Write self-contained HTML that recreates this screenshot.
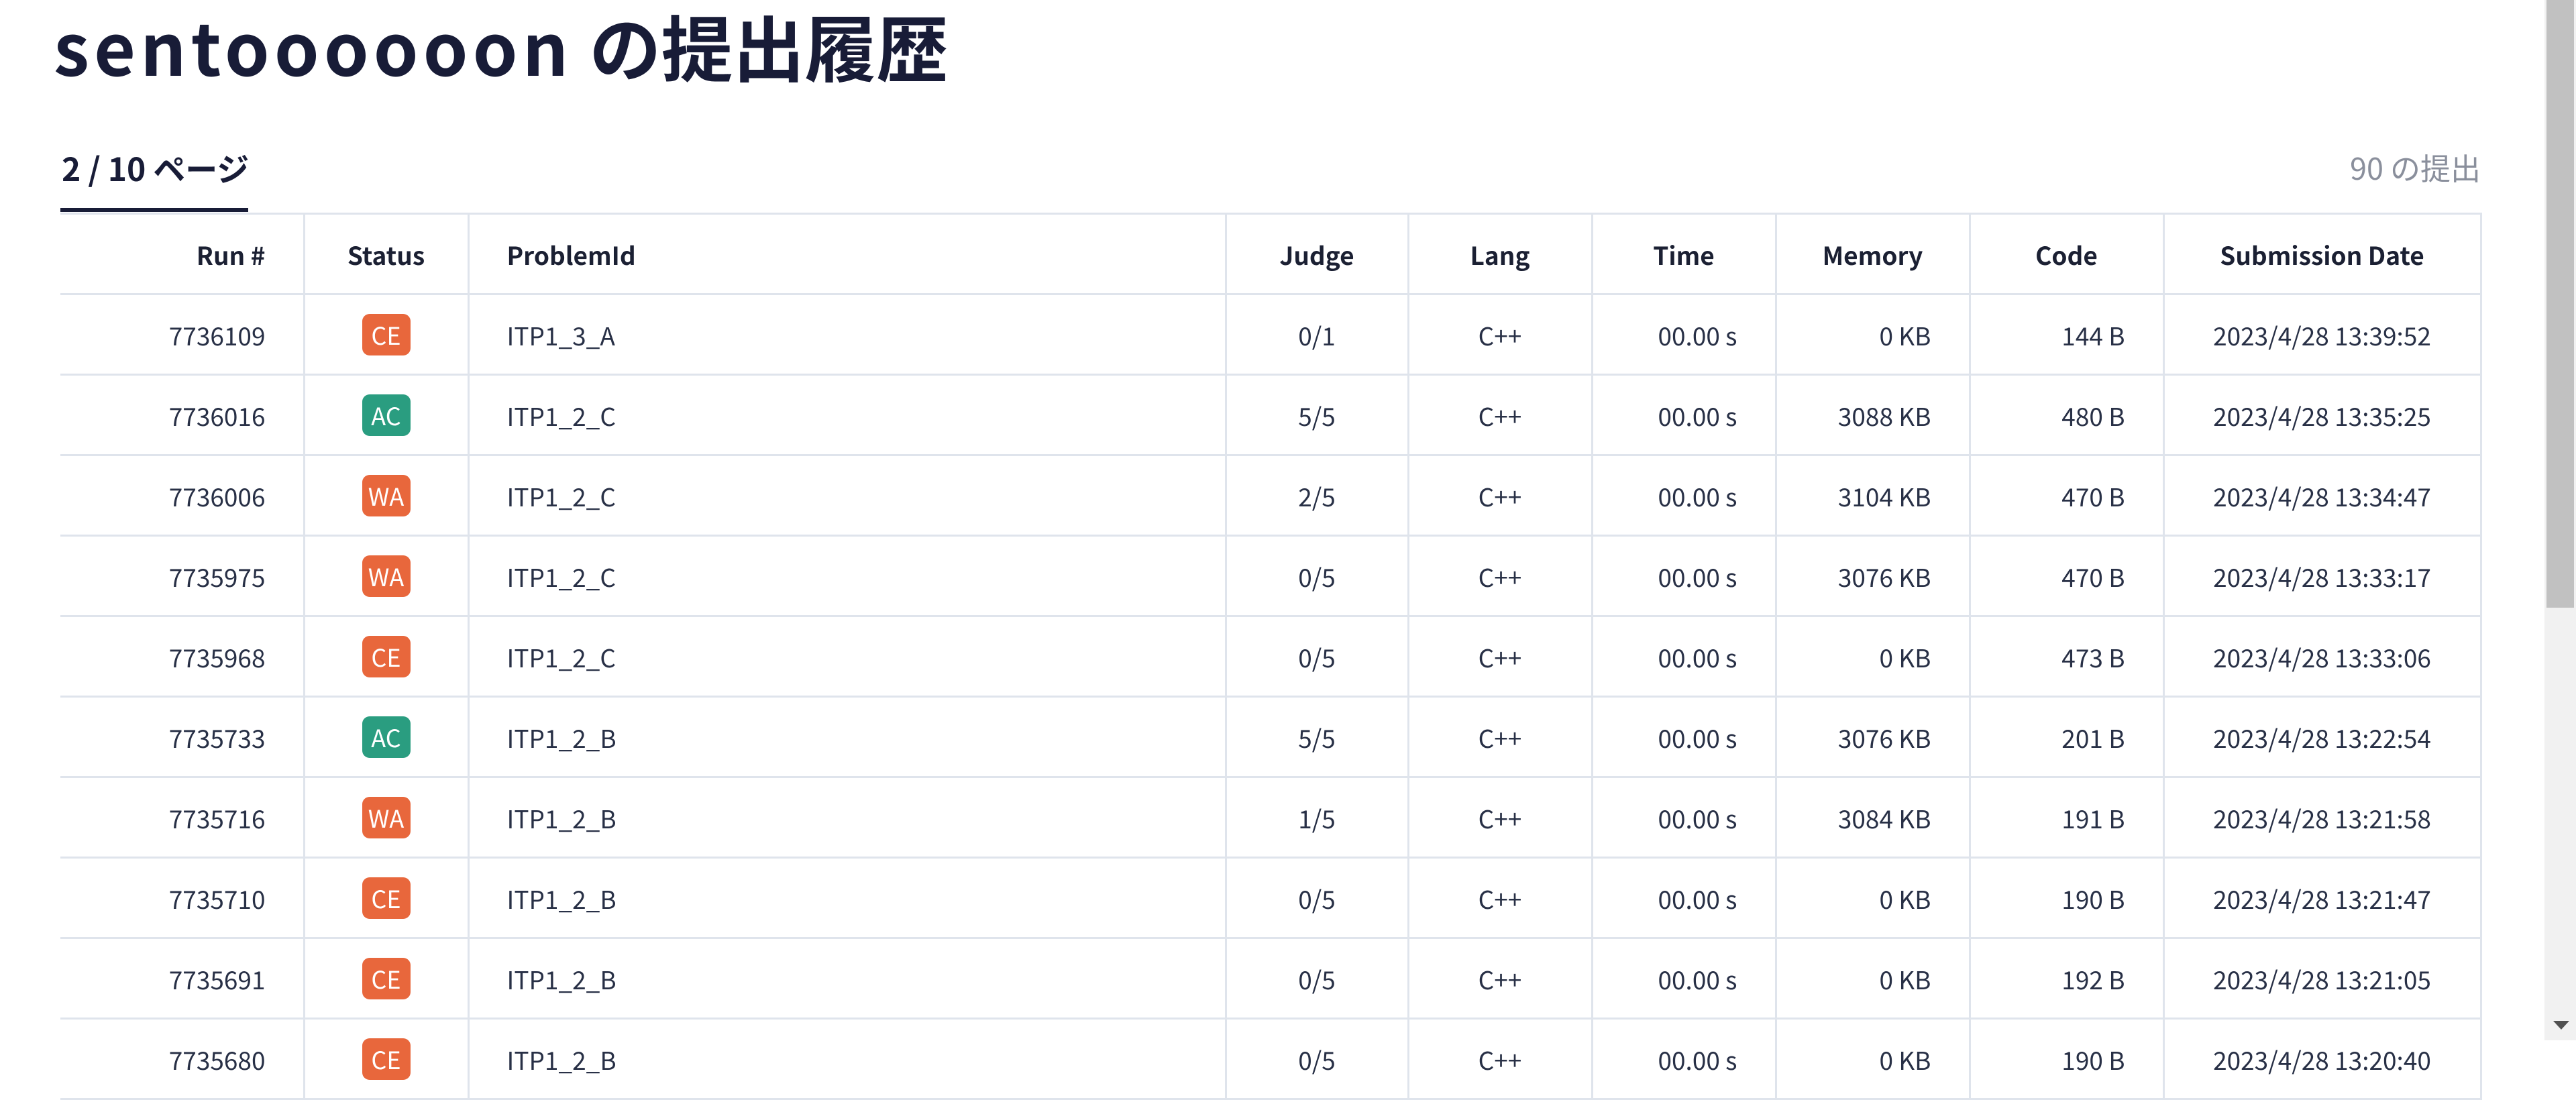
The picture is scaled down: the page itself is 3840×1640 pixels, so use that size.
<!DOCTYPE html>
<html><head><meta charset="utf-8"><style>
html,body{margin:0;padding:0;background:#fff;width:3840px;height:1551px;overflow:hidden;font-family:"Liberation Sans","Noto Sans CJK JP",sans-serif;color:#1b2033}
h1{position:absolute;left:80px;top:-8px;margin:0;font-size:107px;font-weight:700;color:#181c37;font-family:"Noto Sans CJK JP","Liberation Sans",sans-serif;line-height:150px;white-space:nowrap}
h1 .lt{letter-spacing:7px}
.tab{position:absolute;left:90px;top:214px;width:280px;font-size:48px;font-weight:700;font-family:"Noto Sans CJK JP",sans-serif;color:#181c37;line-height:70px;padding-left:2px}
.uline{position:absolute;left:90px;top:310px;width:280px;height:6px;background:#181c37}
.cnt{position:absolute;right:142px;top:214px;font-size:45px;color:#8a8f9c;font-family:"Noto Sans CJK JP",sans-serif;line-height:70px}
table{position:absolute;left:90px;top:317px;border-collapse:collapse;table-layout:fixed;font-family:"Noto Sans CJK JP","Liberation Sans",sans-serif;font-size:37px;color:#283046}
td,th{height:117px;border:3px solid #dfe4ec;padding:0 56px;white-space:nowrap}
th{font-weight:700;color:#1b2033}
tr>*:first-child{border-left:none}
.r{text-align:right}.c{text-align:center}.l{text-align:left}
.b{display:inline-block;width:72px;height:62px;line-height:62px;border-radius:11px;color:#fff;text-align:center;font-size:36px}
.o{background:#e8673c}.g{background:#2a9d80}
.sb{position:absolute;left:3793px;top:0;width:47px;height:1551px;background:#f1f1f1}
.th{position:absolute;left:3796px;top:0;width:41px;height:906px;background:#c1c1c1}
.ar{position:absolute;left:3806px;top:1522px;width:0;height:0;border-left:12px solid transparent;border-right:12px solid transparent;border-top:13px solid #505050}
</style></head><body>
<h1><span class="lt">sentoooooon</span> の提出履歴</h1>
<div class="tab">2 / 10 ページ</div>
<div class="uline"></div>
<div class="cnt">90 の提出</div>
<table>
<colgroup><col style="width:363px"><col style="width:245px"><col style="width:1129px"><col style="width:272px"><col style="width:274px"><col style="width:274px"><col style="width:289px"><col style="width:289px"><col style="width:473px"></colgroup>
<tr><th class="r">Run #</th><th class="c">Status</th><th class="l">ProblemId</th><th class="c">Judge</th><th class="c">Lang</th><th class="c">Time</th><th class="c">Memory</th><th class="c">Code</th><th class="c">Submission Date</th></tr>
<tr><td class="r">7736109</td><td class="c"><span class="b o">CE</span></td><td>ITP1_3_A</td><td class="c">0/1</td><td class="c">C++</td><td class="r">00.00 s</td><td class="r">0 KB</td><td class="r">144 B</td><td class="c">2023/4/28 13:39:52</td></tr>
<tr><td class="r">7736016</td><td class="c"><span class="b g">AC</span></td><td>ITP1_2_C</td><td class="c">5/5</td><td class="c">C++</td><td class="r">00.00 s</td><td class="r">3088 KB</td><td class="r">480 B</td><td class="c">2023/4/28 13:35:25</td></tr>
<tr><td class="r">7736006</td><td class="c"><span class="b o">WA</span></td><td>ITP1_2_C</td><td class="c">2/5</td><td class="c">C++</td><td class="r">00.00 s</td><td class="r">3104 KB</td><td class="r">470 B</td><td class="c">2023/4/28 13:34:47</td></tr>
<tr><td class="r">7735975</td><td class="c"><span class="b o">WA</span></td><td>ITP1_2_C</td><td class="c">0/5</td><td class="c">C++</td><td class="r">00.00 s</td><td class="r">3076 KB</td><td class="r">470 B</td><td class="c">2023/4/28 13:33:17</td></tr>
<tr><td class="r">7735968</td><td class="c"><span class="b o">CE</span></td><td>ITP1_2_C</td><td class="c">0/5</td><td class="c">C++</td><td class="r">00.00 s</td><td class="r">0 KB</td><td class="r">473 B</td><td class="c">2023/4/28 13:33:06</td></tr>
<tr><td class="r">7735733</td><td class="c"><span class="b g">AC</span></td><td>ITP1_2_B</td><td class="c">5/5</td><td class="c">C++</td><td class="r">00.00 s</td><td class="r">3076 KB</td><td class="r">201 B</td><td class="c">2023/4/28 13:22:54</td></tr>
<tr><td class="r">7735716</td><td class="c"><span class="b o">WA</span></td><td>ITP1_2_B</td><td class="c">1/5</td><td class="c">C++</td><td class="r">00.00 s</td><td class="r">3084 KB</td><td class="r">191 B</td><td class="c">2023/4/28 13:21:58</td></tr>
<tr><td class="r">7735710</td><td class="c"><span class="b o">CE</span></td><td>ITP1_2_B</td><td class="c">0/5</td><td class="c">C++</td><td class="r">00.00 s</td><td class="r">0 KB</td><td class="r">190 B</td><td class="c">2023/4/28 13:21:47</td></tr>
<tr><td class="r">7735691</td><td class="c"><span class="b o">CE</span></td><td>ITP1_2_B</td><td class="c">0/5</td><td class="c">C++</td><td class="r">00.00 s</td><td class="r">0 KB</td><td class="r">192 B</td><td class="c">2023/4/28 13:21:05</td></tr>
<tr><td class="r">7735680</td><td class="c"><span class="b o">CE</span></td><td>ITP1_2_B</td><td class="c">0/5</td><td class="c">C++</td><td class="r">00.00 s</td><td class="r">0 KB</td><td class="r">190 B</td><td class="c">2023/4/28 13:20:40</td></tr>
</table>
<div class="sb"></div><div class="th"></div><div class="ar"></div>
</body></html>
